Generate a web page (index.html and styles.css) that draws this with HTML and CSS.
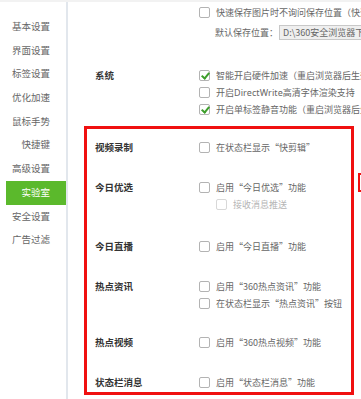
FILE: index.html
```html
<!DOCTYPE html>
<html lang="zh-CN">
<head>
  <meta charset="UTF-8">
  <title>实验室 - 设置</title>
  <link rel="stylesheet" href="styles.css">
</head>
<body>

<div class="window">
  <nav class="sidebar">
    <div class="nav-item">基本设置</div>
    <div class="nav-item">界面设置</div>
    <div class="nav-item">标签设置</div>
    <div class="nav-item">优化加速</div>
    <div class="nav-item">鼠标手势</div>
    <div class="nav-item">快捷键</div>
    <div class="nav-item">高级设置</div>
    <div class="nav-item active">实验室</div>
    <div class="nav-item">安全设置</div>
    <div class="nav-item">广告过滤</div>
  </nav>

  <main class="content">
    <section class="group">
      <div class="group-label"></div>
      <div class="options">
        <div class="option"><span class="box"></span>快速保存图片时不询问保存位置（快速保存到默认位置）</div>
        <div class="option path-row">默认保存位置：<span class="path-input">D:\360安全浏览器下载</span></div>
      </div>
    </section>

    <section class="group system">
      <div class="group-label">系统</div>
      <div class="options">
        <div class="option"><span class="box checked"></span>智能开启硬件加速（重启浏览器后生效）</div>
        <div class="option"><span class="box"></span>开启<span class="latin">DirectWrite</span>高清字体渲染支持</div>
        <div class="option"><span class="box checked"></span>开启单标签静音功能（重启浏览器后生效）</div>
      </div>
    </section>

    <div class="highlight">
      <section class="group">
        <div class="group-label">视频录制</div>
        <div class="options">
          <div class="option"><span class="box"></span>在状态栏显示“快剪辑”</div>
        </div>
      </section>

      <section class="group">
        <div class="group-label">今日优选</div>
        <div class="options">
          <div class="option"><span class="box"></span>启用“今日优选”功能</div>
          <div class="option sub disabled"><span class="box"></span>接收消息推送</div>
        </div>
      </section>

      <section class="group">
        <div class="group-label">今日直播</div>
        <div class="options">
          <div class="option"><span class="box"></span>启用“今日直播”功能</div>
        </div>
      </section>

      <section class="group">
        <div class="group-label">热点资讯</div>
        <div class="options">
          <div class="option"><span class="box"></span>启用“360热点资讯”功能</div>
          <div class="option"><span class="box"></span>在状态栏显示“热点资讯”按钮</div>
        </div>
      </section>

      <section class="group">
        <div class="group-label">热点视频</div>
        <div class="options">
          <div class="option"><span class="box"></span>启用“360热点视频”功能</div>
        </div>
      </section>

      <section class="group">
        <div class="group-label">状态栏消息</div>
        <div class="options">
          <div class="option"><span class="box"></span>启用“状态栏消息”功能</div>
        </div>
      </section>
    </div>
  </main>
</div>

<span class="marker"></span>

</body>
</html>
```

FILE: styles.css
```css
html, body {
  margin: 0;
  height: 100%;
  overflow: hidden;
}
body {
  font-family: "Noto Sans CJK SC", "Microsoft YaHei", sans-serif;
  background-color: #fff;
  color: #666;
  position: relative;
}
.window {
  display: flex;
  height: 100%;
  border-top: 2px solid #f2f2f2;
  box-sizing: border-box;
}
.sidebar {
  width: 66px;
  flex-shrink: 0;
  border-right: 2px solid #e2e7ed;
  padding-top: 13px;
}
.nav-item {
  height: 23.7px;
  line-height: 23.7px;
  margin-left: 6px;
  padding-right: 16px;
  text-align: right;
  font-size: 9.5px;
  color: #666;
}
.nav-item.active {
  background-color: #5bb92c;
  color: #fff;
}
.content {
  flex: 1;
  min-width: 0;
  padding-top: 2px;
  white-space: nowrap;
  overflow: hidden;
}
.group {
  display: flex;
  padding-left: 27px;
}
.group-label {
  width: 104px;
  flex-shrink: 0;
  height: 17px;
  line-height: 17px;
  font-size: 9.5px;
  font-weight: bold;
  color: #333;
}
.options {
  flex: 1;
  min-width: 0;
}
.option {
  display: flex;
  align-items: center;
  height: 17px;
  font-size: 9px;
  color: #666;
}
.latin {
  font-family: "Noto Sans", sans-serif;
  font-size: 9px;
  letter-spacing: 0.1px;
}
.box {
  width: 11px;
  height: 11px;
  box-sizing: border-box;
  border: 1px solid #b3b3b3;
  border-radius: 2px;
  background-color: #fff;
  margin-right: 6px;
  flex-shrink: 0;
  position: relative;
}
.box.checked::after {
  content: "";
  position: absolute;
  left: 3px;
  top: 0px;
  width: 3px;
  height: 6px;
  border-right: 2px solid #3d9e2b;
  border-bottom: 2px solid #3d9e2b;
  transform: rotate(40deg);
}
.path-row {
  margin-top: 3px;
  padding-left: 16px;
}
.path-input {
  display: inline-block;
  height: 15px;
  line-height: 13px;
  box-sizing: border-box;
  margin-left: 1px;
  padding: 0 3px;
  border: 1px solid #c8c8c8;
  background-color: #efefef;
  color: #666;
}
.system {
  margin-top: 26px;
}
.highlight {
  width: 270px;
  box-sizing: border-box;
  margin: 8px 0 0 16px;
  border: 3px solid #f01010;
  padding: 10px 0 1.5px 8px;
}
.highlight .group {
  padding-left: 0;
  margin-top: 22.5px;
}
.highlight .group:first-child {
  margin-top: 0;
}
.option.sub {
  padding-left: 17px;
  margin-bottom: 3px;
}
.option.disabled {
  color: #b5b5b5;
}
.option.disabled .box {
  border-color: #d8d8d8;
}
.marker {
  position: absolute;
  left: 358px;
  top: 173px;
  width: 3px;
  height: 15px;
  border-left: 2px solid #f01010;
  border-top: 2px solid #f01010;
  border-bottom: 2px solid #f01010;
}
```
